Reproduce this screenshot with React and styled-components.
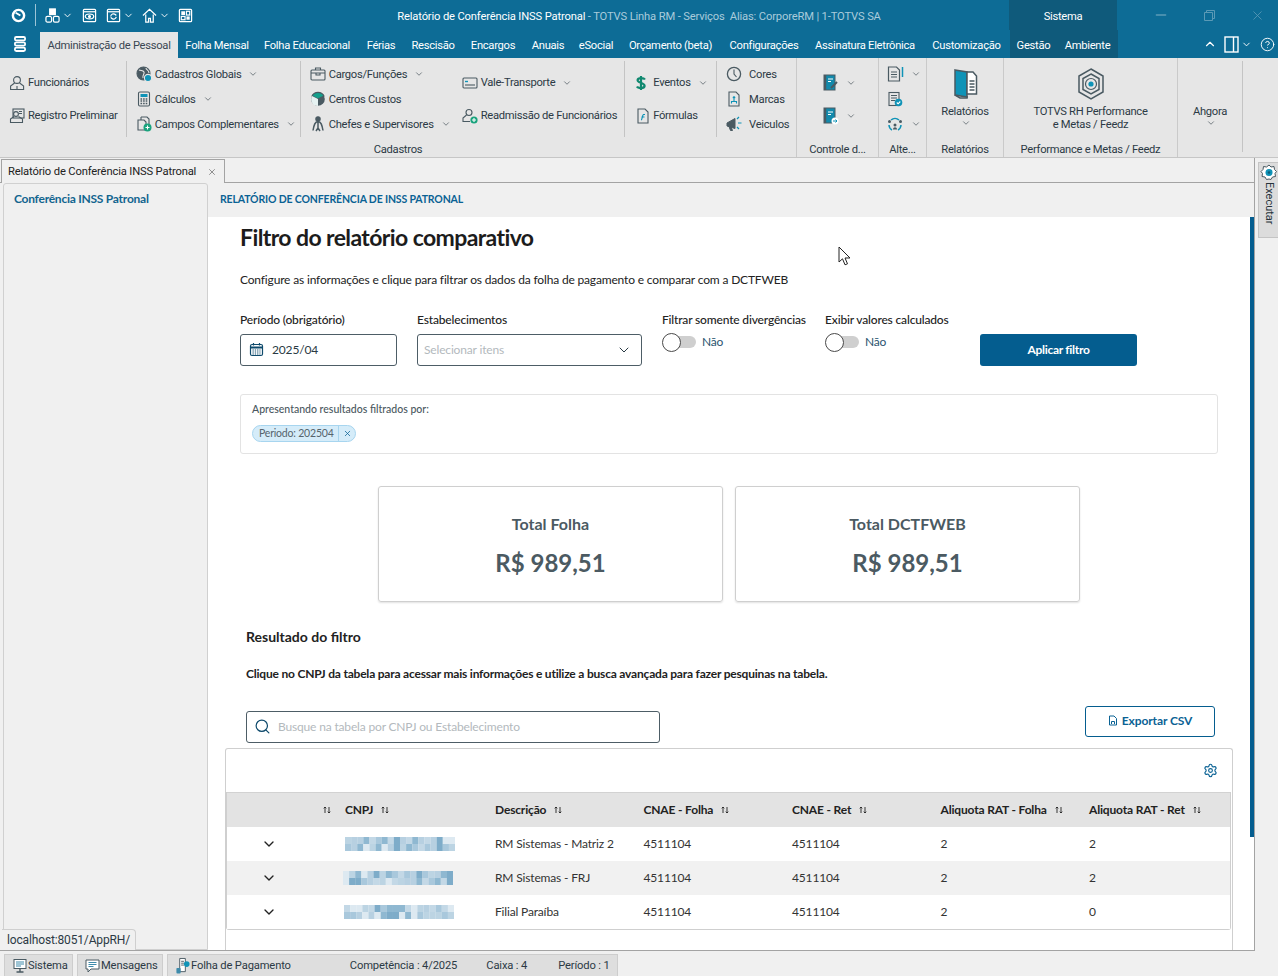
import React from "react";
import styled, { createGlobalStyle } from "styled-components";
import { ChevronDown, ChevronUp, Search, Settings, X, Minus, HelpCircle } from "lucide-react";

const GlobalStyle = createGlobalStyle`
  html, body { margin: 0; padding: 0; background: #f0f0f0; }
  * { box-sizing: border-box; }
`;

const winFont = `Roboto, "Noto Sans", sans-serif`;
const webFont = `Lato, "Open Sans", sans-serif`;
const GRAY = "#4a5a62";
const TEAL = "#0f93b7";

const Screen = styled.div`
  position: relative;
  width: 1278px;
  height: 976px;
  display: flex;
  flex-direction: column;
  overflow: hidden;
  background: #f0f0f0;
  font-family: ${winFont};
  font-size: 11.2px;
  letter-spacing: -0.28px;
  color: #2c3a45;
`;

/* title bar */
const TitleBar = styled.div`
  height: 30px;
  display: flex;
  align-items: center;
  background: #0d6c96;
  color: #fff;
`;

const QuickAccess = styled.div`
  width: 269px;
  height: 100%;
  padding-left: 11px;
  display: flex;
  align-items: center;
`;

const QuickDivider = styled.div`
  width: 1px;
  height: 22px;
  background: #9cc4d6;
  margin: 0 9px 0 9px;
`;

const QuickButton = styled.div`
  display: flex;
  align-items: center;
  gap: 2px;
  margin-right: ${(p) => p.$gap || 8}px;
`;

const WindowTitle = styled.div`
  flex: 1;
  padding-top: 2px;
  text-align: center;
  white-space: nowrap;
  letter-spacing: -0.155px;
  span { color: #a9cbdb; }
`;

const SystemLabel = styled.div`
  width: 108px;
  height: 100%;
  padding-top: 2px;
  display: flex;
  align-items: center;
  justify-content: center;
  background: #0f5a7b;
`;

const WindowControls = styled.div`
  width: 161px;
  display: flex;
  justify-content: flex-end;
  align-items: center;
  gap: 35px;
  padding-right: 13px;
  color: #5b9ab6;
`;

/* ribbon tabs */
const TabRow = styled.div`
  height: 28px;
  display: flex;
  background: #0d6c96;
  color: #fff;
`;

const MenuButton = styled.div`
  width: 40px;
  display: flex;
  align-items: center;
  justify-content: center;
`;

const RibbonTab = styled.div`
  width: ${(p) => p.$w}px;
  display: flex;
  align-items: center;
  justify-content: center;
  white-space: nowrap;
  margin-top: 2px;
  background: ${(p) => (p.$active ? "#e6e6e6" : "transparent")};
  color: ${(p) => (p.$active ? "#3a4652" : "#fff")};
`;

const ContextTabs = styled.div`
  width: 108px;
  display: flex;
  background: #0f5a7b;
`;

const TabTools = styled.div`
  flex: 1;
  display: flex;
  align-items: center;
  justify-content: flex-end;
  padding-right: 3px;
  color: #fff;
`;

const ToolSlot = styled.span`
  display: flex;
  margin-left: ${(p) => p.$left || 0}px;
`;

/* ribbon */
const Ribbon = styled.div`
  height: 100px;
  display: flex;
  background: #e6e6e6;
  border-bottom: 1px solid #c6c6c6;
`;

const RibbonGroup = styled.div`
  width: ${(p) => p.$w}px;
  display: flex;
  flex-direction: column;
  border-right: ${(p) => (p.$plain ? "none" : "1px solid #cacaca")};
`;

const GroupBody = styled.div`
  height: 84px;
  padding-top: 3px;
  display: flex;
`;

const GroupCaption = styled.div`
  height: 15px;
  line-height: 15px;
  text-align: center;
  white-space: nowrap;
`;

const RibbonColumn = styled.div`
  width: ${(p) => p.$w}px;
  height: 76px;
  padding-left: ${(p) => p.$left || 0}px;
  display: flex;
  border-right: ${(p) => (p.$line ? "1px solid #c4c4c4" : "none")};
`;

const ItemStack = styled.div`
  width: ${(p) => (p.$w ? `${p.$w}px` : "auto")};
  flex-shrink: 0;
  height: 100%;
  display: flex;
  flex-direction: column;
  justify-content: center;
`;

const RibbonItem = styled.div`
  height: ${(p) => (p.$tall ? 33 : 25)}px;
  display: flex;
  align-items: center;
  white-space: nowrap;
`;

const ItemIcon = styled.span`
  width: ${(p) => p.$w || 19}px;
  flex-shrink: 0;
  display: flex;
  align-items: center;
`;

const Caret = styled(ChevronDown).attrs({ size: 10, strokeWidth: 1.9 })`
  margin-left: ${(p) => p.$left || 7}px;
  color: #5a646a;
  flex-shrink: 0;
`;

const BigAction = styled.div`
  height: 76px;
  width: 100%;
  display: flex;
  flex-direction: column;
  align-items: center;
  line-height: 13px;
  text-align: center;
  white-space: nowrap;
`;

const BigIcon = styled.div`
  height: 36px;
  margin: 5px 0 3px;
  display: flex;
  align-items: center;
`;

const ActionLabel = styled.div`
  height: 13px;
`;

const AhgoraColumn = styled.div`
  width: 65px;
  height: 91px;
  border-right: 1px solid #c4c4c4;
`;

/* workspace */
const Workspace = styled.div`
  flex: 1;
  min-height: 0;
  display: flex;
`;

const Documents = styled.div`
  width: 1255px;
  display: flex;
  flex-direction: column;
`;

const DocTabStrip = styled.div`
  height: 25px;
  padding: 1px 0 0 1px;
  display: flex;
  align-items: stretch;
  border-bottom: 1px solid #a3a3a3;
  border-right: 1px solid #a3a3a3;
`;

const DocTab = styled.div`
  width: 224px;
  height: 24px;
  padding: 0 7px 0 6px;
  display: flex;
  align-items: center;
  justify-content: space-between;
  background: #f0f0f0;
  border: 1px solid #a3a3a3;
  border-bottom: none;
  color: #222;
  letter-spacing: -0.15px;
  white-space: nowrap;
`;

const Split = styled.div`
  flex: 1;
  min-height: 0;
  display: flex;
  padding-left: 3px;
  border-bottom: 1px solid #a3a3a3;
  border-right: 1px solid #a3a3a3;
`;

const Sidebar = styled.div`
  width: 205px;
  padding: 7px 0 0 10px;
  background: #f0f0f0;
  border: 1px solid #d0d0d0;
  border-radius: 3px 3px 0 0;
  font-family: ${webFont};
  font-size: 12px;
  font-weight: 700;
  letter-spacing: -0.25px;
  color: #12658f;
`;

const Main = styled.div`
  position: relative;
  flex: 1;
  min-width: 0;
  display: flex;
  flex-direction: column;
  overflow: hidden;
  font-family: ${webFont};
  letter-spacing: -0.165px;
`;

const Breadcrumb = styled.div`
  height: 34px;
  padding: 0 0 3px 12px;
  display: flex;
  align-items: center;
  font-size: 10.5px;
  font-weight: 700;
  letter-spacing: -0.15px;
  color: #0a6294;
`;

const Content = styled.div`
  flex: 1;
  padding: 4px 0 0 32px;
  background: #fff;
  overflow: hidden;
`;

const ScrollThumb = styled.div`
  position: absolute;
  top: 34px;
  right: 0;
  width: 4px;
  height: 620px;
  background: #045d8f;
`;

const PageTitle = styled.h1`
  margin: 0;
  height: 32px;
  line-height: 33px;
  font-size: 23px;
  font-weight: 700;
  letter-spacing: -0.6px;
  color: #1c1c1c;
`;

const Lead = styled.p`
  margin: 19px 0 0;
  height: 16px;
  line-height: 16px;
  font-size: 12px;
  color: #222;
`;

const Filters = styled.div`
  margin-top: 24px;
  display: grid;
  grid-template-columns: 157px 225px 143px 135px 157px;
  column-gap: 20px;
`;

const Field = styled.div`
  display: flex;
  flex-direction: column;
  gap: 6px;
`;

const FieldLabel = styled.label`
  height: 16px;
  line-height: 16px;
  font-size: 12px;
  font-weight: 500;
  color: #222;
  white-space: nowrap;
`;

const InputBox = styled.div`
  width: ${(p) => (p.$w ? `${p.$w}px` : "100%")};
  height: 32px;
  padding: 0 ${(p) => p.$right || 8}px 1px ${(p) => p.$left || 8}px;
  display: flex;
  align-items: center;
  gap: ${(p) => p.$gap || 8}px;
  border: 1px solid #4d5d66;
  border-radius: 3px;
  background: #fff;
  font-size: 12px;
  color: #2a3a44;
`;

const Placeholder = styled.span`
  flex: 1;
  color: #b3b9bd;
  white-space: nowrap;
`;

const ToggleRow = styled.div`
  height: 15px;
  display: flex;
  align-items: center;
  gap: 6px;
  font-size: 12px;
  color: #2b5570;
`;

const Toggle = styled.div`
  width: 33px;
  height: 12px;
  margin-left: 1px;
  position: relative;
  border-radius: 6px;
  background: #cfcfcf;

  &::before {
    content: "";
    position: absolute;
    left: -1px;
    top: -3px;
    width: 17px;
    height: 17px;
    border-radius: 50%;
    border: 1px solid #4a4a4a;
    background: #fff;
  }
`;

const PrimaryButton = styled.button`
  align-self: end;
  height: 32px;
  padding: 0 0 2px;
  border: none;
  border-radius: 3px;
  background: #045d8f;
  color: #fff;
  font-family: ${webFont};
  font-size: 12px;
  font-weight: 700;
  letter-spacing: -0.3px;
`;

const AppliedBox = styled.div`
  width: 978px;
  height: 60px;
  margin-top: 28px;
  padding: 7px 11px 0;
  border: 1px solid #e3e3e3;
  border-radius: 3px;
  font-size: 10.5px;
  font-weight: 500;
  letter-spacing: 0;
  color: #4a5860;
`;

const AppliedLabel = styled.div`
  height: 14px;
  line-height: 14px;
`;

const Chip = styled.div`
  width: 104px;
  height: 17px;
  margin-top: 9px;
  display: flex;
  align-items: center;
  border: 1px solid #a7d5ef;
  border-radius: 9px;
  background: #d5ecf9;
  color: #56646c;
  font-weight: 400;
  letter-spacing: -0.2px;
`;

const ChipText = styled.span`
  width: 85px;
  padding: 0 0 1px 6px;
  white-space: nowrap;
`;

const ChipClose = styled.span`
  flex: 1;
  height: 100%;
  display: flex;
  align-items: center;
  justify-content: center;
  border-left: 1px solid #a7d5ef;
  color: #0a6294;
`;

const Totals = styled.div`
  margin: 32px 0 0 138px;
  display: flex;
  gap: 12px;
`;

const TotalCard = styled.div`
  width: 345px;
  height: 116px;
  display: flex;
  flex-direction: column;
  align-items: center;
  border: 1px solid #cfcfcf;
  border-radius: 3px;
  box-shadow: 0 1px 2px rgba(0, 0, 0, 0.12);
  color: #4b5a62;
  letter-spacing: 0;
`;

const TotalLabel = styled.div`
  margin-top: 26px;
  height: 22px;
  line-height: 22px;
  font-size: 16px;
  font-weight: 700;
`;

const TotalValue = styled.div`
  margin-top: 12px;
  height: 32px;
  line-height: 32px;
  font-size: 24px;
  font-weight: 700;
`;

const SectionTitle = styled.h2`
  margin: 25px 0 0 6px;
  height: 20px;
  line-height: 20px;
  font-size: 14px;
  font-weight: 700;
  letter-spacing: 0;
  color: #222;
`;

const SectionHint = styled.p`
  margin: 19px 0 0 6px;
  height: 16px;
  line-height: 16px;
  font-size: 12px;
  font-weight: 700;
  letter-spacing: -0.2px;
  color: #222;
`;

const SearchRow = styled.div`
  width: 969px;
  height: 37px;
  margin: 24px 0 0 6px;
  display: flex;
  justify-content: space-between;
  align-items: flex-end;
`;

const OutlineButton = styled.button`
  align-self: flex-start;
  width: 130px;
  height: 31px;
  padding: 0 0 2px;
  display: flex;
  align-items: center;
  justify-content: center;
  gap: 4px;
  border: 1px solid #045d8f;
  border-radius: 3px;
  background: #fff;
  color: #0a6294;
  font-family: ${webFont};
  font-size: 12px;
  font-weight: 700;
  letter-spacing: -0.1px;
`;

const TableCard = styled.div`
  width: 1008px;
  margin: 5px 0 0 -15px;
  height: 220px;
  border: 1px solid #cfcfcf;
  border-bottom: none;
  border-radius: 3px 3px 0 0;
`;

const TableTools = styled.div`
  height: 43px;
  padding-right: 14px;
  display: flex;
  align-items: center;
  justify-content: flex-end;
  color: #0a6294;
`;

const Table = styled.div`
  width: 1005px;
  border: 1px solid #cfcfcf;
  border-top: none;
  border-radius: 0 0 3px 3px;
`;

const TableRow = styled.div`
  height: ${(p) => (p.$head ? 35 : 34)}px;
  padding-bottom: 1px;
  display: grid;
  grid-template-columns: 118px 150px 148.5px 148.5px 148.5px 148.5px 1fr;
  align-items: center;
  font-size: 12px;
  background: ${(p) => (p.$head ? "#e3e3e3" : p.$odd ? "#f1f1f1" : "#fff")};
  color: #333;
  border-top: ${(p) => (p.$head ? "1px solid #d2d2d2" : "none")};
`;

const HeadCell = styled.div`
  display: flex;
  align-items: center;
  justify-content: ${(p) => (p.$end ? "flex-end" : "flex-start")};
  gap: 8px;
  padding-right: ${(p) => (p.$end ? 14 : 0)}px;
  font-weight: 700;
  color: #222;
  white-space: nowrap;
`;

const Cell = styled.div`
  white-space: nowrap;
`;

const RowToggle = styled.div`
  padding-left: 34px;
  display: flex;
  color: #222;
`;

const MaskedValue = styled.svg`
  display: block;
  margin-left: ${(p) => p.$shift}px;
`;

/* status bar */
const StatusBar = styled.div`
  height: 25px;
  padding: 3px 0 0 4px;
  display: flex;
  gap: 4px;
  letter-spacing: -0.15px;
`;

const StatusCell = styled.div`
  width: ${(p) => p.$w}px;
  height: 22px;
  padding-left: ${(p) => p.$left || 7}px;
  display: flex;
  align-items: center;
  background: #dedede;
  border: 1px solid #cdcdcd;
  border-bottom: none;
  white-space: nowrap;

  svg { flex-shrink: 0; }
`;

const StatusInfo = styled.span`
  margin-left: ${(p) => p.$left}px;
`;

const UrlBubble = styled.div`
  position: absolute;
  left: 2px;
  top: 929px;
  width: 134px;
  height: 21px;
  padding-left: 5px;
  display: flex;
  align-items: center;
  background: #f0f0f0;
  border: 1px solid #cfcfcf;
  border-left: none;
  border-bottom: none;
  border-radius: 0 4px 0 0;
  font-size: 12px;
  letter-spacing: -0.15px;
`;

const ExecuteTab = styled.div`
  margin: 4px 0 0 3px;
  width: 20px;
  height: 76px;
  display: flex;
  flex-direction: column;
  align-items: center;
  padding-top: 1px;
  background: #dcdcdc;
  border: 1px solid #c4c4c4;
  border-right: none;
`;

const ExecuteLabel = styled.span`
  writing-mode: vertical-rl;
  font-size: 11px;
  letter-spacing: 0;
  color: #26323a;
  line-height: 14px;
`;

const Pointer = styled.svg`
  position: absolute;
  left: 838px;
  top: 246px;
`;

/* drawn icons */
const Icon = ({ size = 16, children }) => (
  <svg width={size} height={size} viewBox="0 0 16 16" fill="none" stroke={GRAY} strokeWidth="1.1">
    {children}
  </svg>
);

const WhiteIcon = ({ children, size = 15 }) => (
  <svg width={size} height={size} viewBox="0 0 16 16" fill="none" stroke="#fff" strokeWidth="1.3">
    {children}
  </svg>
);

const Logo = () => (
  <WhiteIcon size={15}>
    <circle cx="8" cy="8" r="6" strokeWidth="2.6" />
    <path d="M5 5l5 3" strokeWidth="2" />
  </WhiteIcon>
);

const OrgIcon = () => (
  <WhiteIcon>
    <rect x="5" y="1" width="6" height="6" fill="#fff" />
    <rect x="1" y="9" width="6" height="6" rx="1.5" />
    <rect x="9" y="9" width="6" height="6" rx="1.5" />
  </WhiteIcon>
);

const EyeCard = () => (
  <WhiteIcon>
    <rect x="1.5" y="1.5" width="13" height="13" rx="1" />
    <path d="M1.5 4h13" />
    <ellipse cx="8" cy="9" rx="4.5" ry="2.6" />
    <circle cx="8" cy="9" r="1" fill="#fff" />
  </WhiteIcon>
);

const RefreshCard = () => (
  <WhiteIcon>
    <rect x="1.5" y="1.5" width="13" height="13" rx="1" />
    <path d="M1.5 4h13" />
    <path d="M5 9a3 3 0 0 1 5-2l1 1M11 9.5a3 3 0 0 1-5 1.5L5 10" />
  </WhiteIcon>
);

const HomeIcon = () => (
  <WhiteIcon>
    <path d="M1 8l7-6.5L15 8M4 7v8h3v-4h2v4h3V7" />
  </WhiteIcon>
);

const GridIcon = () => (
  <WhiteIcon>
    <rect x="1.5" y="1.5" width="13" height="13" rx="1" />
    <rect x="3.5" y="3.5" width="4" height="4" fill="#fff" stroke="none" />
    <rect x="9" y="3.5" width="3.5" height="4" />
    <rect x="3.5" y="9" width="4" height="3.5" />
    <rect x="9" y="9" width="3.5" height="3.5" fill="#fff" stroke="none" />
  </WhiteIcon>
);

const StackIcon = () => (
  <svg width="14" height="16" viewBox="0 0 14 16" fill="none" stroke="#fff" strokeWidth="1.8">
    <rect x="1.9" y="1" width="10.2" height="3.4" rx="1.4" />
    <rect x="1.9" y="6.3" width="10.2" height="3.4" rx="1.4" />
    <rect x="1.9" y="11.6" width="10.2" height="3.4" rx="1.4" />
  </svg>
);

const PaneIcon = () => (
  <svg width="15" height="17" viewBox="0 0 15 17" fill="none" stroke="#fff" strokeWidth="1.4">
    <rect x="1" y="1" width="13" height="15" />
    <path d="M9.5 1v15" />
  </svg>
);

const PersonIcon = () => (
  <Icon>
    <circle cx="8" cy="5" r="3.4" />
    <path d="M5.6 8l-4 3v3.5h13V11l-4-3M8 11v3.5" />
  </Icon>
);

const PersonDocIcon = () => (
  <Icon>
    <rect x="4" y="1" width="11" height="9" />
    <circle cx="7" cy="6" r="2.4" />
    <path d="M5 8.5l-3.5 2.5v3.5h12V11l-4-2.5M10 3.5h3M10 5.5h3" />
  </Icon>
);

const GlobeIcon = () => (
  <Icon>
    <circle cx="7.5" cy="7.5" r="6.5" fill={GRAY} />
    <path d="M3 4c2 1 4 0 5 2s-2 3-1 6M10 2c0 2 3 2 3 5" stroke="#e6e6e6" />
    <circle cx="12" cy="12" r="3.6" fill={TEAL} stroke="#e6e6e6" />
  </Icon>
);

const CalcIcon = () => (
  <Icon>
    <rect x="2.5" y="1" width="11" height="14" rx="1.4" />
    <rect x="4.5" y="3" width="7" height="3" fill={TEAL} stroke="none" />
    <path d="M4.5 8h7M4.5 10h7M4.5 12.5h7" strokeWidth="1.3" strokeDasharray="1.6 1" />
  </Icon>
);

const DocPlusIcon = () => (
  <Icon>
    <path d="M5 1h6l2 2v5M5 1v3M2 4h6l2 2v8H2z" fill="#e6e6e6" />
    <circle cx="11.5" cy="11.5" r="4" fill="#19a37d" stroke="none" />
    <path d="M11.5 9.5v4M9.5 11.5h4" stroke="#fff" />
  </Icon>
);

const CaseIcon = () => (
  <Icon>
    <rect x="1" y="4" width="14" height="10" rx="1" />
    <path d="M5.5 4V2h5v2M1 7h14M6 7v2h4V7" />
  </Icon>
);

const PieIcon = () => (
  <Icon>
    <circle cx="8" cy="8" r="6.8" fill={GRAY} stroke="none" />
    <path d="M2 5a6.8 6.8 0 0 1 12 0L8 8z" fill="#14a08c" />
    <path d="M8 8l-6-3a6.8 6.8 0 0 0 6 10z" fill="#e6f2f2" stroke="none" />
  </Icon>
);

const ChiefIcon = () => (
  <Icon>
    <circle cx="8" cy="3" r="2.2" fill={GRAY} />
    <path d="M8 5.5c-3 0-4 3-5 9M8 5.5c3 0 4 3 5 9M8 6v6M8 12l-2 3M8 12l2 3" strokeWidth="1.5" />
  </Icon>
);

const TicketIcon = () => (
  <Icon>
    <rect x="1" y="3" width="14" height="10" rx="1" />
    <path d="M3 6.5h3" stroke={TEAL} strokeWidth="1.4" />
    <path d="M3 10h10" />
  </Icon>
);

const PersonPlusIcon = () => (
  <Icon>
    <circle cx="7" cy="4.5" r="3" />
    <path d="M4.5 7l-3.5 3v3.5h7M9 7.5" />
    <circle cx="12" cy="12" r="3.6" fill="#19a37d" stroke="none" />
    <path d="M12 10v4M10 12h4" stroke="#fff" />
  </Icon>
);

const DollarIcon = () => (
  <svg width="12" height="16" viewBox="0 0 12 16" fill="none" stroke="#10886f" strokeWidth="2.2">
    <path d="M10 4.5C9 3 3 2.4 2.6 5 2.2 8 9.8 7.6 9.6 11 9.3 13.6 3 13.3 2 11.4M6 1v14" />
  </svg>
);

const FormulaIcon = () => (
  <Icon>
    <path d="M3 1h7l3 3v11H3z" />
    <path d="M6 12c1.5 0 1-5 2.5-5.5h1.5M6.5 9h3" stroke={TEAL} strokeWidth="1.2" />
  </Icon>
);

const ClockIcon = () => (
  <Icon>
    <circle cx="8" cy="8" r="6.6" strokeWidth="1.3" />
    <path d="M8 3.5V8l2.5 3" />
  </Icon>
);

const BadgeIcon = () => (
  <Icon>
    <path d="M3 1h7l3 3v11H3z" />
    <circle cx="8" cy="6.5" r="1.3" fill={TEAL} stroke="none" />
    <path d="M5.5 12.5v-2h5v2M8 8v2.5" stroke={TEAL} />
  </Icon>
);

const MegaphoneIcon = () => (
  <svg width="17" height="16" viewBox="0 0 17 16" fill={GRAY} stroke={GRAY}>
    <path d="M1 7l8-4.5v10L1 10z" />
    <path d="M3 10.5l1.5 4h2L5 11" />
    <path d="M11 3l2-2M12 7h3.5M11 11l2 2" fill="none" stroke={TEAL} strokeWidth="1.2" />
  </svg>
);

const NoteEditIcon = () => (
  <svg width="16" height="18" viewBox="0 0 16 18">
    <rect x="1" y="1" width="11" height="15" fill="#1289ab" stroke={GRAY} />
    <rect x="1" y="1" width="2.2" height="15" fill={GRAY} />
    <path d="M5 5h5M5 7.5h3" stroke="#fff" />
    <path d="M8 14l6-6" stroke={GRAY} strokeWidth="2" />
  </svg>
);

const NoteSendIcon = () => (
  <svg width="16" height="18" viewBox="0 0 16 18">
    <rect x="1" y="1" width="11" height="15" fill="#1289ab" stroke={GRAY} />
    <rect x="1" y="1" width="2.2" height="15" fill={GRAY} />
    <path d="M5 5h5M5 7.5h3" stroke="#fff" />
    <circle cx="12" cy="14" r="3.5" fill="#fff" />
    <path d="M10 14h4M12.5 12.5l1.5 1.5-1.5 1.5" stroke={TEAL} fill="none" />
  </svg>
);

const DocLinesIcon = () => (
  <svg width="17" height="16" viewBox="0 0 17 16" fill="none" stroke={GRAY} strokeWidth="1.2">
    <path d="M1.5 1h8l3 3v11h-11z" />
    <path d="M4 6h6M4 8.5h6M4 11h6" />
    <path d="M15.5 1v10" stroke={TEAL} strokeWidth="1.5" />
  </svg>
);

const DocCheckIcon = () => (
  <Icon>
    <rect x="2" y="1.5" width="10" height="13" fill="#e6e6e6" />
    <path d="M4 4.5h6M4 7h6M4 9.5h4" />
    <circle cx="11.5" cy="11.5" r="3.8" fill={TEAL} stroke="none" />
    <path d="M9.8 11.5l1.3 1.3 2.2-2.3" stroke="#fff" />
  </Icon>
);

const CycleIcon = () => (
  <Icon>
    <path d="M4 4a6 6 0 0 1 8 0M14 9a6 6 0 0 1-3 5M2 9a6 6 0 0 0 3 5" stroke={TEAL} strokeWidth="1.5" />
    <circle cx="8" cy="9" r="1.5" fill={GRAY} stroke="none" />
    <circle cx="2.5" cy="5.5" r="1.5" fill={GRAY} stroke="none" />
    <circle cx="13.5" cy="5.5" r="1.5" fill={GRAY} stroke="none" />
    <path d="M6 13.5c0-3 4-3 4 0z" fill={GRAY} stroke="none" />
  </Icon>
);

const ReportsIcon = () => (
  <svg width="25" height="30" viewBox="0 0 25 30">
    <path d="M2 1l12 2v25L2 26z" fill="#0f93b7" stroke={GRAY} strokeWidth="1.5" />
    <path d="M14 3h6l3.5 4v18H14z" fill="#fff" stroke={GRAY} strokeWidth="1.5" />
    <path d="M16.5 12h5M16.5 15h5M16.5 18h5M16.5 21h5" stroke={GRAY} strokeWidth="1.5" />
    <path d="M2 26l5 3h7v-2" fill="none" stroke={GRAY} strokeWidth="1.5" />
  </svg>
);

const HexTargetIcon = () => (
  <svg width="26" height="32" viewBox="0 0 26 32" fill="none" stroke={GRAY}>
    <path d="M13 1l12 7v16l-12 7-12-7V8z" strokeWidth="1.5" />
    <path d="M13 6l8 4.5v11L13 26l-8-4.5v-11z" strokeWidth="1.5" />
    <circle cx="13" cy="16" r="5.5" strokeWidth="1.2" />
    <circle cx="13" cy="16" r="2.6" fill={TEAL} stroke="none" />
  </svg>
);

const CalendarIcon = () => (
  <svg width="15" height="15" viewBox="0 0 15 15" fill="none" stroke="#0e4a6c" strokeWidth="1.2">
    <rect x="1.5" y="2.5" width="12" height="11" rx="1.5" />
    <path d="M1.5 5.5h12" strokeWidth="2" />
    <path d="M4.5 1v2.5M10.5 1v2.5" />
    <path d="M3.5 8h8M3.5 10h8M3.5 12h8" strokeDasharray="1.3 1" />
  </svg>
);

const SortArrows = () => (
  <svg width="8" height="8" viewBox="0 0 8 8" fill="none" stroke="#222" strokeWidth="0.9">
    <path d="M2 7V1M0.7 2.3L2 1l1.3 1.3M6 1v6M4.7 5.7L6 7l1.3-1.3" />
  </svg>
);

const FileIcon = () => (
  <svg width="10" height="11" viewBox="0 0 10 11" fill="none" stroke="#0a6294">
    <path d="M1.5 1h4.5l2.5 2.5v6.5h-7z" />
    <path d="M3.5 9V6.5h3V9" />
  </svg>
);

const MonitorIcon = () => (
  <svg width="16" height="16" viewBox="0 0 16 16" fill="none" stroke={GRAY}>
    <rect x="2" y="1.5" width="12" height="9" fill="#fff" />
    <path d="M4 4h8M4 6h8M4 8h5" stroke="#3e8bab" />
    <path d="M8 10.5v3M4.5 14h7" strokeWidth="1.4" />
  </svg>
);

const MessageIcon = () => (
  <svg width="17" height="16" viewBox="0 0 17 16" fill="none" stroke={GRAY}>
    <path d="M2 2h13v9H7l-3 3v-3H2z" fill="#fff" />
    <path d="M4.5 4.5h8M4.5 6.5h8M4.5 8.5h5" stroke="#3e8bab" />
  </svg>
);

const PayrollIcon = () => (
  <svg width="16" height="18" viewBox="0 0 17 18" fill="none" stroke={GRAY}>
    <path d="M5 1h6v14H5z" fill="#fff" />
    <path d="M6.5 4h3M6.5 6h3M6.5 8h3" />
    <circle cx="12.5" cy="7" r="3" fill={TEAL} stroke="none" />
    <rect x="1.5" y="11" width="4.5" height="6" rx="1" fill="#3e8bab" stroke="none" />
  </svg>
);

const ExecuteGear = () => (
  <svg width="18" height="18" viewBox="0 0 18 18">
    <path
      d="M9 1l2 2 3-.5.5 3 2 2-1.5 2 .5 3-3 .5-1.5 2.5L9 15l-2.5.5L5 13l-3-.5.5-3L1 7.5l2-2 .5-3 3 .5z"
      fill="#fff"
      stroke={GRAY}
    />
    <circle cx="9" cy="8.5" r="3.5" fill={TEAL} />
    <circle cx="9" cy="8.5" r="1.2" fill="#0c5d78" />
  </svg>
);

const tabs = [
  ["Folha Mensal", 78],
  ["Folha Educacional", 102],
  ["Férias", 46],
  ["Rescisão", 58],
  ["Encargos", 62],
  ["Anuais", 48],
  ["eSocial", 48],
  ["Orçamento (beta)", 101],
  ["Configurações", 86],
  ["Assinatura Eletrônica", 116],
  ["Customização", 87],
];

const rows = [
  { name: "RM Sistemas - Matriz 2", folha: "4511104", ret: "4511104", ratFolha: "2", ratRet: "2", shift: 0, seed: 7 },
  { name: "RM Sistemas - FRJ", folha: "4511104", ret: "4511104", ratFolha: "2", ratRet: "2", shift: -2, seed: 23 },
  { name: "Filial Paraíba", folha: "4511104", ret: "4511104", ratFolha: "2", ratRet: "0", shift: -1, seed: 41 },
];

const headers = ["CNPJ", "Descrição", "CNAE - Folha", "CNAE - Ret", "Aliquota RAT - Folha", "Aliquota RAT - Ret"];
const maskColors = ["#c3d8e6", "#a9c8dc", "#8fb8d1", "#dde9f1", "#b7d0e1", "#7eacc9", "#bcd4e3"];

// pixelated CNPJ, same pixels on every render
const MaskedCnpj = ({ seed, shift }) => {
  const cells = [];
  let n = seed;
  for (let row = 0; row < 2; row++) {
    for (let col = 0; col < 18; col++) {
      n = (n * 31 + 11) % 97;
      cells.push(
        <rect key={`${row}-${col}`} x={col * 6.11} y={row * 7} width="6.2" height="7" fill={maskColors[n % maskColors.length]} />
      );
    }
  }
  return (
    <MaskedValue $shift={shift} width="110" height="14" viewBox="0 0 110 14">
      {cells}
    </MaskedValue>
  );
};

const Item = ({ icon, label, tall, caret, iconWidth }) => (
  <RibbonItem $tall={tall}>
    {icon && <ItemIcon $w={iconWidth}>{icon}</ItemIcon>}
    {label}
    {caret && <Caret />}
  </RibbonItem>
);

const App = () => {
  return (
    <Screen>
      <GlobalStyle />
      <TitleBar>
        <QuickAccess>
          <Logo />
          <QuickDivider />
          <QuickButton $gap={9}>
            <OrgIcon />
            <ChevronDown size={11} strokeWidth={2} />
          </QuickButton>
          <QuickButton $gap={9}>
            <EyeCard />
          </QuickButton>
          <QuickButton>
            <RefreshCard />
            <ChevronDown size={11} strokeWidth={2} />
          </QuickButton>
          <QuickButton>
            <HomeIcon />
            <ChevronDown size={11} strokeWidth={2} />
          </QuickButton>
          <GridIcon />
        </QuickAccess>
        <WindowTitle>
          Relatório de Conferência INSS Patronal <span>- TOTVS Linha RM - Serviços&nbsp; Alias: CorporeRM | 1-TOTVS SA</span>
        </WindowTitle>
        <SystemLabel>Sistema</SystemLabel>
        <WindowControls>
          <Minus size={16} />
          <svg width="11" height="11" viewBox="0 0 11 11" fill="none" stroke="currentColor">
            <path d="M.5 2.5h8v8h-8zM2.5 2.5v-2h8v8h-2" />
          </svg>
          <X size={15} strokeWidth={1.3} />
        </WindowControls>
      </TitleBar>

      <TabRow>
        <MenuButton>
          <StackIcon />
        </MenuButton>
        <RibbonTab $active $w={138}>
          Administração de Pessoal
        </RibbonTab>
        {tabs.map(([label, w]) => (
          <RibbonTab key={label} $w={w}>
            {label}
          </RibbonTab>
        ))}
        <ContextTabs>
          <RibbonTab $w={47}>Gestão</RibbonTab>
          <RibbonTab $w={61}>Ambiente</RibbonTab>
        </ContextTabs>
        <TabTools>
          <ChevronUp size={14} strokeWidth={2} />
          <ToolSlot $left={7}>
            <PaneIcon />
          </ToolSlot>
          <ToolSlot $left={2}>
            <ChevronDown size={11} strokeWidth={2} />
          </ToolSlot>
          <ToolSlot $left={8}>
            <HelpCircle size={15} strokeWidth={1.5} />
          </ToolSlot>
        </TabTools>
      </TabRow>

      <Ribbon>
        <RibbonGroup $w={797}>
          <GroupBody>
            <RibbonColumn $w={127} $left={9} $line>
              <ItemStack>
                <Item tall icon={<PersonIcon />} label="Funcionários" />
                <Item tall icon={<PersonDocIcon />} label="Registro Preliminar" />
              </ItemStack>
            </RibbonColumn>
            <RibbonColumn $w={174} $left={9} $line>
              <ItemStack>
                <Item icon={<GlobeIcon />} label="Cadastros Globais" caret />
                <Item icon={<CalcIcon />} label="Cálculos" caret />
                <Item icon={<DocPlusIcon />} label="Campos Complementares" caret />
              </ItemStack>
            </RibbonColumn>
            <RibbonColumn $w={325} $left={9} $line>
              <ItemStack $w={152}>
                <Item icon={<CaseIcon />} label="Cargos/Funções" caret />
                <Item icon={<PieIcon />} label="Centros Custos" />
                <Item icon={<ChiefIcon />} label="Chefes e Supervisores" caret />
              </ItemStack>
              <ItemStack>
                <Item tall icon={<TicketIcon />} label="Vale-Transporte" caret />
                <Item tall icon={<PersonPlusIcon />} label="Readmissão de Funcionários" />
              </ItemStack>
            </RibbonColumn>
            <RibbonColumn $w={92} $left={10} $line>
              <ItemStack>
                <Item tall iconWidth={18} icon={<DollarIcon />} label="Eventos" caret />
                <Item tall iconWidth={18} icon={<FormulaIcon />} label="Fórmulas" />
              </ItemStack>
            </RibbonColumn>
            <RibbonColumn $w={79} $left={9}>
              <ItemStack>
                <Item iconWidth={23} icon={<ClockIcon />} label="Cores" />
                <Item iconWidth={23} icon={<BadgeIcon />} label="Marcas" />
                <Item iconWidth={23} icon={<MegaphoneIcon />} label="Veiculos" />
              </ItemStack>
            </RibbonColumn>
          </GroupBody>
          <GroupCaption>Cadastros</GroupCaption>
        </RibbonGroup>

        <RibbonGroup $w={82}>
          <GroupBody>
            <RibbonColumn $w={82} $left={26}>
              <ItemStack>
                <Item tall caret icon={<NoteEditIcon />} iconWidth={16} />
                <Item tall caret icon={<NoteSendIcon />} iconWidth={16} />
              </ItemStack>
            </RibbonColumn>
          </GroupBody>
          <GroupCaption>Controle d...</GroupCaption>
        </RibbonGroup>

        <RibbonGroup $w={48}>
          <GroupBody>
            <RibbonColumn $w={48} $left={8}>
              <ItemStack>
                <Item caret icon={<DocLinesIcon />} iconWidth={17} />
                <Item icon={<DocCheckIcon />} iconWidth={17} />
                <Item caret icon={<CycleIcon />} iconWidth={17} />
              </ItemStack>
            </RibbonColumn>
          </GroupBody>
          <GroupCaption>Alte...</GroupCaption>
        </RibbonGroup>

        <RibbonGroup $w={77}>
          <GroupBody>
            <BigAction>
              <BigIcon>
                <ReportsIcon />
              </BigIcon>
              <ActionLabel>Relatórios</ActionLabel>
              <Caret $left={1} />
            </BigAction>
          </GroupBody>
          <GroupCaption>Relatórios</GroupCaption>
        </RibbonGroup>

        <RibbonGroup $w={174}>
          <GroupBody>
            <BigAction>
              <BigIcon>
                <HexTargetIcon />
              </BigIcon>
              TOTVS RH Performance
              <br />e Metas / Feedz
            </BigAction>
          </GroupBody>
          <GroupCaption>Performance e Metas / Feedz</GroupCaption>
        </RibbonGroup>

        <RibbonGroup $w={65} $plain>
          <GroupBody>
            <AhgoraColumn>
              <BigAction>
                <BigIcon />
                <ActionLabel>Ahgora</ActionLabel>
                <Caret $left={1} />
              </BigAction>
            </AhgoraColumn>
          </GroupBody>
        </RibbonGroup>
      </Ribbon>

      <Workspace>
        <Documents>
          <DocTabStrip>
            <DocTab>
              Relatório de Conferência INSS Patronal
              <X size={10} strokeWidth={1.5} color="#555" />
            </DocTab>
          </DocTabStrip>
          <Split>
            <Sidebar>Conferência INSS Patronal</Sidebar>
            <Main>
              <Breadcrumb>RELATÓRIO DE CONFERÊNCIA DE INSS PATRONAL</Breadcrumb>
              <Content>
                <PageTitle>Filtro do relatório comparativo</PageTitle>
                <Lead>
                  Configure as informações e clique para filtrar os dados da folha de pagamento e comparar com a DCTFWEB
                </Lead>
                <Filters>
                  <Field>
                    <FieldLabel>Período (obrigatório)</FieldLabel>
                    <InputBox>
                      <CalendarIcon />
                      2025/04
                    </InputBox>
                  </Field>
                  <Field>
                    <FieldLabel>Estabelecimentos</FieldLabel>
                    <InputBox $left={6} $right={9}>
                      <Placeholder>Selecionar itens</Placeholder>
                      <ChevronDown size={16} strokeWidth={1.5} />
                    </InputBox>
                  </Field>
                  <Field>
                    <FieldLabel>Filtrar somente divergências</FieldLabel>
                    <ToggleRow>
                      <Toggle />
                      Não
                    </ToggleRow>
                  </Field>
                  <Field>
                    <FieldLabel>Exibir valores calculados</FieldLabel>
                    <ToggleRow>
                      <Toggle />
                      Não
                    </ToggleRow>
                  </Field>
                  <PrimaryButton>Aplicar filtro</PrimaryButton>
                </Filters>

                <AppliedBox>
                  <AppliedLabel>Apresentando resultados filtrados por:</AppliedLabel>
                  <Chip>
                    <ChipText>Periodo: 202504</ChipText>
                    <ChipClose>
                      <X size={9} strokeWidth={2} />
                    </ChipClose>
                  </Chip>
                </AppliedBox>

                <Totals>
                  <TotalCard>
                    <TotalLabel>Total Folha</TotalLabel>
                    <TotalValue>R$ 989,51</TotalValue>
                  </TotalCard>
                  <TotalCard>
                    <TotalLabel>Total DCTFWEB</TotalLabel>
                    <TotalValue>R$ 989,51</TotalValue>
                  </TotalCard>
                </Totals>

                <SectionTitle>Resultado do filtro</SectionTitle>
                <SectionHint>
                  Clique no CNPJ da tabela para acessar mais informações e utilize a busca avançada para fazer pesquinas na tabela.
                </SectionHint>

                <SearchRow>
                  <InputBox $w={414} $gap={7} $left={7}>
                    <Search size={17} strokeWidth={1.7} color="#0e4a6c" />
                    <Placeholder>Busque na tabela por CNPJ ou Estabelecimento</Placeholder>
                  </InputBox>
                  <OutlineButton>
                    <FileIcon />
                    Exportar CSV
                  </OutlineButton>
                </SearchRow>

                <TableCard>
                  <TableTools>
                    <Settings size={15} strokeWidth={1.8} />
                  </TableTools>
                  <Table>
                    <TableRow $head>
                      <HeadCell $end>
                        <SortArrows />
                      </HeadCell>
                      {headers.map((h) => (
                        <HeadCell key={h}>
                          {h}
                          <SortArrows />
                        </HeadCell>
                      ))}
                    </TableRow>
                    {rows.map((r, i) => (
                      <TableRow key={r.name} $odd={i % 2 === 1}>
                        <RowToggle>
                          <ChevronDown size={16} strokeWidth={2} />
                        </RowToggle>
                        <MaskedCnpj seed={r.seed} shift={r.shift} />
                        <Cell>{r.name}</Cell>
                        <Cell>{r.folha}</Cell>
                        <Cell>{r.ret}</Cell>
                        <Cell>{r.ratFolha}</Cell>
                        <Cell>{r.ratRet}</Cell>
                      </TableRow>
                    ))}
                  </Table>
                </TableCard>
              </Content>
              <ScrollThumb />
            </Main>
          </Split>
        </Documents>
        <ExecuteTab>
          <ExecuteGear />
          <ExecuteLabel>Executar</ExecuteLabel>
        </ExecuteTab>
      </Workspace>

      <StatusBar>
        <StatusCell $w={69}>
          <MonitorIcon />
          Sistema
        </StatusCell>
        <StatusCell $w={86} $left={6}>
          <MessageIcon />
          Mensagens
        </StatusCell>
        <StatusCell $w={451}>
          <PayrollIcon />
          Folha de Pagamento
          <StatusInfo $left={59}>Competência : 4/2025</StatusInfo>
          <StatusInfo $left={29}>Caixa : 4</StatusInfo>
          <StatusInfo $left={31}>Período : 1</StatusInfo>
        </StatusCell>
      </StatusBar>

      <UrlBubble>localhost:8051/AppRH/</UrlBubble>
      <Pointer width="13" height="20" viewBox="0 0 13 20">
        <path d="M1 1v15l3.5-3.2 2.5 6 2.5-1-2.5-5.8H12z" fill="#fff" stroke="#222" />
      </Pointer>
    </Screen>
  );
};

export default App;
